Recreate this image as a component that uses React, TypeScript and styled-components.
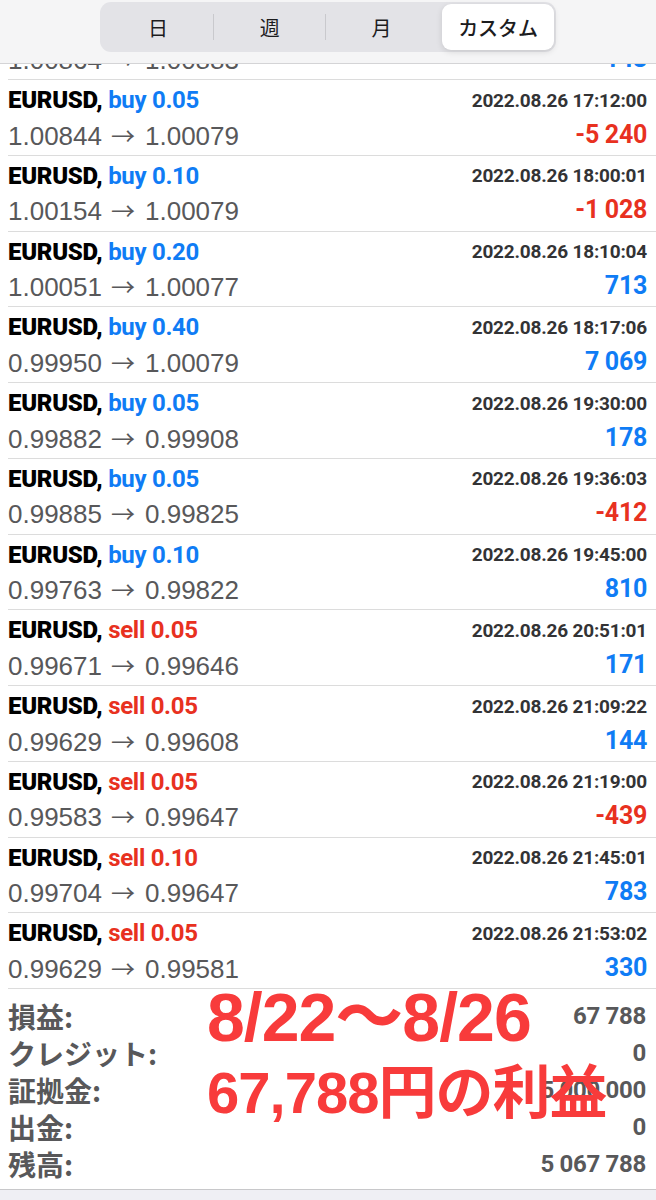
import styled, { createGlobalStyle } from "styled-components";

const GlobalStyle = createGlobalStyle`
  html, body {
    margin: 0;
    padding: 0;
    background: #efeff4;
  }
  body {
    font-family: "Liberation Sans", "Noto Sans CJK JP", sans-serif;
  }
`;

const COND = `"Roboto", "Noto Sans CJK JP", sans-serif`;

const BLUE = "#0f7cf5";
const RED = "#e8311f";

interface Trade {
    side: "buy" | "sell";
    volume: string;
    open: string;
    close: string;
    time: string;
    profit: string;
}

const trades: Trade[] = [
    { side: "buy", volume: "0.05", open: "1.00844", close: "1.00079", time: "17:12:00", profit: "-5 240" },
    { side: "buy", volume: "0.10", open: "1.00154", close: "1.00079", time: "18:00:01", profit: "-1 028" },
    { side: "buy", volume: "0.20", open: "1.00051", close: "1.00077", time: "18:10:04", profit: "713" },
    { side: "buy", volume: "0.40", open: "0.99950", close: "1.00079", time: "18:17:06", profit: "7 069" },
    { side: "buy", volume: "0.05", open: "0.99882", close: "0.99908", time: "19:30:00", profit: "178" },
    { side: "buy", volume: "0.05", open: "0.99885", close: "0.99825", time: "19:36:03", profit: "-412" },
    { side: "buy", volume: "0.10", open: "0.99763", close: "0.99822", time: "19:45:00", profit: "810" },
    { side: "sell", volume: "0.05", open: "0.99671", close: "0.99646", time: "20:51:01", profit: "171" },
    { side: "sell", volume: "0.05", open: "0.99629", close: "0.99608", time: "21:09:22", profit: "144" },
    { side: "sell", volume: "0.05", open: "0.99583", close: "0.99647", time: "21:19:00", profit: "-439" },
    { side: "sell", volume: "0.10", open: "0.99704", close: "0.99647", time: "21:45:01", profit: "783" },
    { side: "sell", volume: "0.05", open: "0.99629", close: "0.99581", time: "21:53:02", profit: "330" },
];

const summary = [
    { label: "損益:", value: "67 788" },
    { label: "クレジット:", value: "0" },
    { label: "証拠金:", value: "5 000 000" },
    { label: "出金:", value: "0" },
    { label: "残高:", value: "5 067 788" },
];

const Page = styled.div`
    width: 656px;
    background: #ffffff;
    display: flex;
    flex-direction: column;
`;

const Header = styled.div`
    height: 64px;
    background: #f5f5f6;
    border-bottom: 1px solid #d4d4d6;
    display: flex;
    justify-content: center;
    align-items: flex-start;
    padding-top: 2px;
    box-sizing: border-box;
`;

const Segments = styled.div`
    width: 456px;
    height: 50px;
    border-radius: 11px;
    background: #e3e3e7;
    display: flex;
    align-items: stretch;
    padding: 2px;
    box-sizing: border-box;
`;

const Segment = styled.div<{ $active?: boolean; $divider?: boolean }>`
    flex: 1;
    display: flex;
    align-items: center;
    justify-content: center;
    position: relative;
    font-family: "Noto Sans CJK JP", sans-serif;
    font-size: 20px;
    font-weight: ${(p) => (p.$active ? 500 : 400)};
    color: #1c1c1e;
    border-radius: 9px;
    margin-left: ${(p) => (p.$active ? "5px" : "0")};
    background: ${(p) => (p.$active ? "#ffffff" : "transparent")};
    box-shadow: ${(p) => (p.$active ? "0 2px 6px rgba(0,0,0,0.12)" : "none")};

    &::after {
        content: "";
        display: ${(p) => (p.$divider ? "block" : "none")};
        position: absolute;
        right: 0;
        top: 10px;
        bottom: 10px;
        width: 1px;
        background: #c9c9cd;
    }
`;

const List = styled.div`
    display: flex;
    flex-direction: column;
`;

const Clip = styled.div`
    height: 16px;
    overflow: hidden;
    display: flex;
    flex-direction: column;
    justify-content: flex-end;
`;

const Row = styled.div`
    height: 75.75px;
    box-sizing: border-box;
    margin-left: 8px;
    padding: 3px 9px 0 0;
    border-bottom: 1px solid #dcdcdc;
    display: grid;
    grid-template-columns: 1fr auto;
    grid-template-rows: 34px 34px;
    align-items: center;
    flex-shrink: 0;
`;

const Title = styled.div`
    font-family: ${COND};
    font-weight: 900;
    font-size: 24px;
    letter-spacing: -0.3px;
    color: #000000;
    white-space: nowrap;
`;

const Side = styled.span<{ $side: "buy" | "sell" }>`
    font-weight: 700;
    color: ${(p) => (p.$side === "buy" ? BLUE : RED)};
`;

const Time = styled.div`
    font-family: ${COND};
    font-weight: 700;
    font-size: 19px;
    letter-spacing: -0.2px;
    color: #333335;
    text-align: right;
    white-space: nowrap;
`;

const Price = styled.div`
    font-family: "Liberation Sans", sans-serif;
    font-size: 26px;
    color: #58585a;
    white-space: nowrap;
`;

const Arrow = styled.span`
    font-family: "Noto Sans CJK JP", sans-serif;
    font-size: 24px;
    margin: 0 10px 0 9px;
`;

const Profit = styled.div<{ $negative: boolean }>`
    font-family: ${COND};
    font-weight: 700;
    font-size: 25px;
    letter-spacing: -0.3px;
    color: ${(p) => (p.$negative ? RED : BLUE)};
    text-align: right;
    white-space: nowrap;
`;

const Summary = styled.div`
    position: relative;
    padding: 8px 10px 7px 8px;
    border-bottom: 1px solid #c8c8ca;
    display: flex;
    flex-direction: column;
`;

const SumRow = styled.div`
    height: 37px;
    display: flex;
    align-items: center;
    justify-content: space-between;
`;

const SumLabel = styled.div`
    font-family: "Noto Sans CJK JP", sans-serif;
    font-weight: 700;
    font-size: 28px;
    color: #58585a;
`;

const SumValue = styled.div`
    font-family: ${COND};
    font-weight: 700;
    font-size: 24px;
    letter-spacing: -0.3px;
    color: #58585a;
`;

const Overlay = styled.div`
    position: absolute;
    left: 207px;
    top: -10px;
    display: flex;
    flex-direction: column;
    pointer-events: none;
`;

const Caption = styled.div<{ $size: number }>`
    font-family: "Liberation Sans", "Noto Sans CJK JP", sans-serif;
    font-weight: 700;
    font-size: ${(p) => p.$size}px;
    line-height: 76px;
    color: #f83b3b;
    white-space: nowrap;
    letter-spacing: -1px;
`;

const Footer = styled.div`
    height: 9px;
    background: #efeff4;
`;

const TradeRow = ({ t }: { t: Trade }) => (
    <Row>
        <Title>
            EURUSD, <Side $side={t.side}>{t.side} {t.volume}</Side>
        </Title>
        <Time>2022.08.26 {t.time}</Time>
        <Price>
            {t.open}
            <Arrow>→</Arrow>
            {t.close}
        </Price>
        <Profit $negative={t.profit.startsWith("-")}>{t.profit}</Profit>
    </Row>
);

const App = () => {
    const tabs = ["日", "週", "月", "カスタム"];
    return (
        <Page>
            <GlobalStyle />
            <Header>
                <Segments>
                    {tabs.map((tab, i) => (
                        <Segment key={tab} $active={i === 3} $divider={i < 2}>
                            {tab}
                        </Segment>
                    ))}
                </Segments>
            </Header>
            <List>
                <Clip>
                    <TradeRow
                        t={{ side: "buy", volume: "0.05", open: "1.00864", close: "1.00883", time: "17:05:12", profit: "143" }}
                    />
                </Clip>
                {trades.map((t) => (
                    <TradeRow key={t.time} t={t} />
                ))}
            </List>
            <Summary>
                {summary.map((s) => (
                    <SumRow key={s.label}>
                        <SumLabel>{s.label}</SumLabel>
                        <SumValue>{s.value}</SumValue>
                    </SumRow>
                ))}
                <Overlay>
                    <Caption $size={68}>8/22〜8/26</Caption>
                    <Caption $size={58}>67,788円の利益</Caption>
                </Overlay>
            </Summary>
            <Footer />
        </Page>
    );
};

export default App;
